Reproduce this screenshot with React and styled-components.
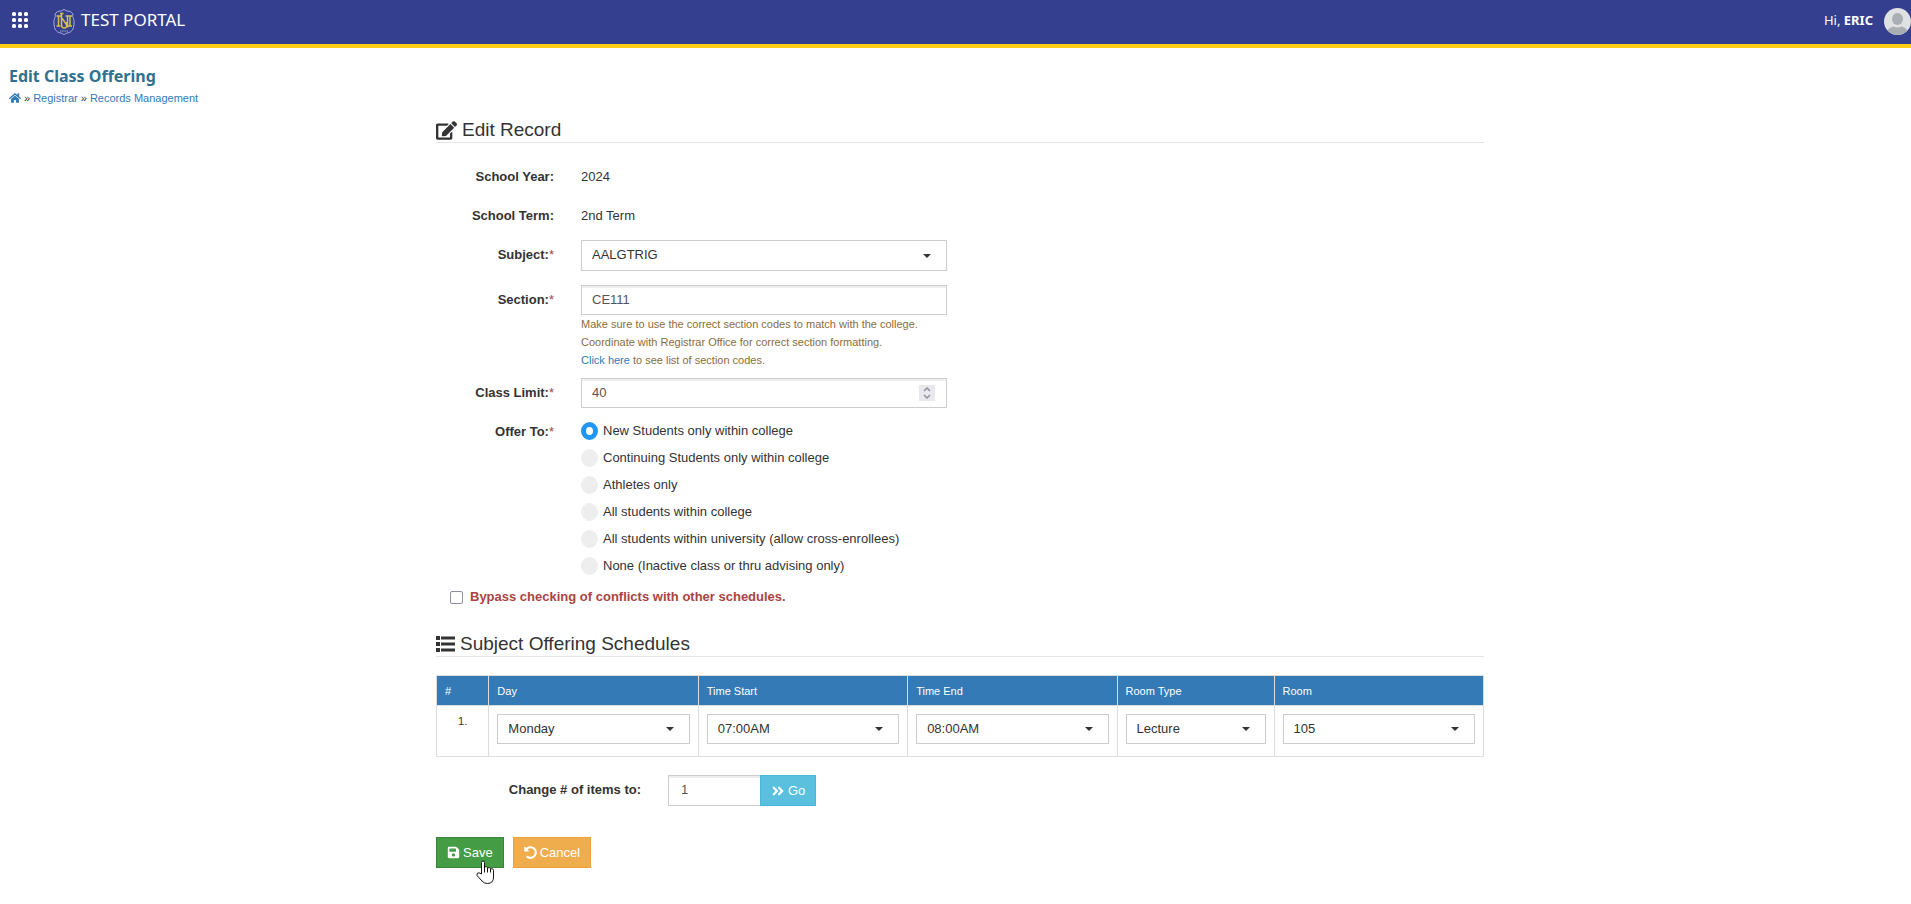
import React, { useState } from 'react';
import styled, { createGlobalStyle } from 'styled-components';
import { FaHome, FaEdit, FaSave, FaUndoAlt, FaAngleDoubleRight } from 'react-icons/fa';

const GlobalStyle = createGlobalStyle`
    * { box-sizing:border-box; }

    body{
        margin:0;
        background:#fff;
        color:#333;
        font-family:"Liberation Sans", Arial, sans-serif;
        font-size:13px;
        line-height:18px;
    }

    button, input, select{
        font-family:inherit;
        font-size:13px;
    }
`

const TopBar = styled.header`
    display:flex;
    align-items:flex-start;
    height:48px;
    padding:8px 0 0 12px;
    background:#353f8f;
    border-bottom:4px solid #fdd017;
    color:#fff;
    font-family:"Noto Sans", "Open Sans", sans-serif;
    line-height:24px;
`

const MenuButton = styled.button`
    display:flex;
    margin-right:25px;
    padding:4px 0;
    border:0;
    background:none;
    color:#fff;
    cursor:pointer;
`

const Brand = styled.a`
    display:flex;
    align-items:flex-start;
    gap:6px;
    color:#fff;
    font-size:17px;
    font-weight:400;
    text-decoration:none;
`

const Account = styled.div`
    display:flex;
    align-items:flex-start;
    gap:11px;
    margin-left:auto;
    font-size:13px;
`

const PageHead = styled.div`
    padding:17px 9px 0;
`

const PageTitle = styled.h1`
    margin:0;
    color:#31708f;
    font-family:"Noto Sans", "Open Sans", sans-serif;
    font-size:16px;
    font-weight:700;
    line-height:22px;
`

const Crumbs = styled.nav`
    display:flex;
    align-items:center;
    gap:3px;
    margin-top:2px;
    font-size:11px;
`

const Link = styled.a`
    display:inline-flex;
    color:#337ab7;
    text-decoration:none;
`

const Page = styled.main`
    display:grid;
    grid-template-columns:436fr 1048fr 427fr;
`

const Form = styled.form`
    grid-column:2;
    padding:9px 0 36px;
`

const Legend = styled.h2`
    display:flex;
    align-items:center;
    gap:5px;
    margin:${props => props.$spaced ? '24px 0 0' : '0'};
    padding-top:2px;
    border-bottom:1px solid #e5e5e5;
    font-size:19px;
    font-weight:400;
    line-height:24px;
`

const Fields = styled.div`
    display:grid;
    gap:${props => props.$gap || 14}px;
    margin-top:${props => props.$top || 0}px;
`

const Row = styled.div`
    display:grid;
    grid-template-columns:118fr 366fr 510fr;
    column-gap:27px;
    align-items:start;
`

const Label = styled.label`
    padding-top:6px;
    font-weight:700;
    text-align:right;
`

const Star = styled.span`
    color:#a94442;
    font-weight:400;
`

const Value = styled.div`
    padding-top:6px;
`

const Input = styled.input`
    display:block;
    width:100%;
    height:30px;
    padding:0 10px 2px;
    border:1px solid #ccc;
    border-radius:0;
    background:#fff;
    box-shadow:inset 0 2px 0 #eee;
    color:#555;

    &::-webkit-inner-spin-button{
        display:none;
    }
`

const SelectWrap = styled.div`
    display:grid;
    align-items:center;

    & > *{
        grid-area:1 / 1;
    }

    & svg{
        justify-self:end;
        margin-right:16px;
        pointer-events:none;
    }
`

const SelectBox = styled.select`
    width:100%;
    height:${props => props.$tall ? 31 : 30}px;
    padding:0 10px 2px;
    border:1px solid #ccc;
    border-radius:0;
    appearance:none;
    background:#fff;
    color:#333;
`

const NumberWrap = styled(SelectWrap)`
    & svg{
        margin-right:12px;
    }
`

const Help = styled.p`
    margin:0;
    color:#8a6d3b;
    font-size:11px;
    white-space:nowrap;
`

const Choices = styled.div`
    display:grid;
    gap:9px;
    padding-top:5px;
`

const Choice = styled.label`
    display:flex;
    align-items:center;
    gap:5px;
    white-space:nowrap;
`

const Radio = styled.input`
    appearance:none;
    width:17px;
    height:18px;
    margin:0;
    border:${props => props.checked ? '5px solid #2196f3' : '0'};
    border-radius:50%;
    background:${props => props.checked ? '#fff' : '#eee'};
`

const Bypass = styled.label`
    display:flex;
    align-items:center;
    gap:7px;
    margin-top:13px;
    padding-left:14px;
    color:#a94442;
    font-weight:700;
`

const Check = styled.input`
    appearance:none;
    width:13px;
    height:13px;
    margin:0;
    border:1px solid #8f8f9d;
    border-radius:2px;
    background:#fff;

    &:checked{
        background:#2196f3;
    }
`

const Table = styled.table`
    width:100%;
    margin-top:18px;
    border-collapse:collapse;
    table-layout:fixed;
    font-size:11px;

    & th, & td{
        border:1px solid #ddd;
        padding:8px;
        text-align:left;
        vertical-align:top;
    }

    & th{
        padding:6px 8px 5px;
        background:#337ab7;
        color:#fff;
        font-weight:400;
    }

    & td{
        padding-bottom:12px;
    }

    & td:first-child{
        padding-top:6px;
        text-align:center;
    }
`

const Items = styled.div`
    display:flex;
    align-items:flex-start;
    margin-top:18px;
`

const ItemsLabel = styled(Label)`
    width:205px;
    margin-right:27px;
`

const ItemsInput = styled(Input)`
    width:92px;
    height:31px;
    padding:0 12px 2px;
    border-right:0;
`

const Button = styled.button`
    display:flex;
    align-items:center;
    gap:3px;
    height:31px;
    padding:0 10px;
    border:1px solid ${props => props.$edge};
    background:${props => props.$fill};
    color:#fff;
    cursor:pointer;
`

const Actions = styled.div`
    display:flex;
    gap:9px;
    margin-top:31px;
`

const SaveSlot = styled.div`
    position:relative;
`

const Pointer = styled.svg`
    position:absolute;
    left:40px;
    top:23px;
    pointer-events:none;
`

const offers = [
    'New Students only within college',
    'Continuing Students only within college',
    'Athletes only',
    'All students within college',
    'All students within university (allow cross-enrollees)',
    'None (Inactive class or thru advising only)'
]

const schedule = [
    { name:'Day', value:'Monday', width:'20%' },
    { name:'Time Start', value:'07:00AM', width:'20%' },
    { name:'Time End', value:'08:00AM', width:'20%' },
    { name:'Room Type', value:'Lecture', width:'15%' },
    { name:'Room', value:'105', width:'20%' }
]

const GridIcon = () => (
    <svg width="16" height="16" viewBox="0 0 16 16" fill="currentColor" aria-hidden="true">
        {[0, 6, 12].map(y => [0, 6, 12].map(x => (
            <rect key={x + '-' + y} x={x} y={y} width="4" height="4" rx="1.5" />
        )))}
    </svg>
)

const Crest = () => (
    <svg width="22" height="28" viewBox="0 0 22 28" fill="none" aria-hidden="true">
        <path d="M4.500 3.500Q8 3.500 11 1.500q3 2 6.500 2L20 6q-1 2 .5 4.500.8 2 .5 5.500-.3 4-1.500 6-1.500 2.300-4.500 2.800-2.500.4-4 1.900-1.500-1.500-4-1.900-3-.5-4.500-2.800Q1.300 20 1 16q-.3-3.500.5-5.500Q3 8 2 6z" stroke="#a3aad2" />
        <path d="M3.500 8h4l7 10V8M5.500 8v10M3.500 18h4M12.500 8H19M17 8v10M14 18h5M8.500 6v10.500q0 3.500 2.700 3.500t2.700-3.500V14M7 5.500h3.500" stroke="#d8c04e" strokeWidth="1.500" />
        <path d="M7 23h8" stroke="#a3aad2" strokeDasharray="1.500 .7" />
    </svg>
)

const Avatar = () => (
    <svg width="27" height="27" viewBox="0 0 27 27" aria-hidden="true">
        <clipPath id="round"><circle cx="13.5" cy="13.5" r="13.5" /></clipPath>
        <g clipPath="url(#round)">
            <rect width="27" height="27" fill="#dfe1e3" />
            <ellipse cx="13.500" cy="11" rx="5.500" ry="6" fill="#a9afb3" />
            <path d="M3 25c0-4 4-6 6.500-6.500 2.500 1.300 5.500 1.300 8 0C20 19 24 21 24 25v3H3z" fill="#a9afb3" />
        </g>
    </svg>
)

const ListIcon = () => (
    <svg width="19" height="16" viewBox="0 0 19 16" fill="currentColor" aria-hidden="true">
        <path d="M0 0h4v4H0zM0 6h4v4H0zM0 12h4v4H0zM5 0.500h14v3H5zM5 6.500h14v3H5zM5 12.500h14v3H5z" />
    </svg>
)

const Caret = () => (
    <svg width="8" height="4" viewBox="0 0 8 4" aria-hidden="true">
        <path d="M0 0h8L4 4z" fill="#333" />
    </svg>
)

const Spinner = () => (
    <svg width="16" height="16" viewBox="0 0 16 16" fill="none" aria-hidden="true">
        <rect width="16" height="16" fill="#e9e9ed" />
        <path d="M5 6l3-3 3 3M5 10l3 3 3-3" stroke="#8f8f9d" strokeWidth="1.500" />
    </svg>
)

const Hand = () => (
    <Pointer width="19" height="25" viewBox="0 0 19 25" aria-hidden="true">
        <path d="M5.500 14V2.500a1.500 1.500 0 0 1 3 0V7q2.500-1 3 .8 2.500-.8 3 .9 3-.4 3 1.500V17q0 6.500-6 6.500-3.500 0-5.500-2.500L1 15.500Q.5 12.500 3 12.800z" fill="#fff" stroke="#15151f" />
        <path d="M8.500 7v5.500M11.500 8v4.500M14.500 9v3.500" stroke="#15151f" fill="none" />
    </Pointer>
)

const Select = ({ id, value, tall, label }) => (
    <SelectWrap>
        <SelectBox id={id} defaultValue={value} $tall={tall} aria-label={label}>
            <option>{value}</option>
        </SelectBox>
        <Caret />
    </SelectWrap>
)

const App = () => {
    const [offer, setOffer] = useState(0);

    return (
        <>
            <GlobalStyle />
            <TopBar>
                <MenuButton type="button" aria-label="Menu"><GridIcon /></MenuButton>
                <Brand href="#"><Crest />TEST PORTAL</Brand>
                <Account>
                    <span>Hi, <b>ERIC</b></span>
                    <Avatar />
                </Account>
            </TopBar>
            <PageHead>
                <PageTitle>Edit Class Offering</PageTitle>
                <Crumbs>
                    <Link href="#" aria-label="Home"><FaHome size={12} /></Link>
                    <span>»</span>
                    <Link href="#">Registrar</Link>
                    <span>»</span>
                    <Link href="#">Records Management</Link>
                </Crumbs>
            </PageHead>
            <Page>
                <Form onSubmit={e => e.preventDefault()}>
                    <Legend><FaEdit size={21} />Edit Record</Legend>
                    <Fields $gap={15} $top={19}>
                        <Row>
                            <Label as="div">School Year:</Label>
                            <Value>2024</Value>
                        </Row>
                        <Row>
                            <Label as="div">School Term:</Label>
                            <Value>2nd Term</Value>
                        </Row>
                    </Fields>
                    <Fields $gap={14} $top={15}>
                        <Row>
                            <Label htmlFor="subject">Subject:<Star>*</Star></Label>
                            <Select id="subject" value="AALGTRIG" tall />
                        </Row>
                        <Row>
                            <Label htmlFor="section">Section:<Star>*</Star></Label>
                            <div>
                                <Input id="section" defaultValue="CE111" />
                                <Help>
                                    Make sure to use the correct section codes to match with the college.<br />
                                    Coordinate with Registrar Office for correct section formatting.<br />
                                    <Link href="#">Click here</Link> to see list of section codes.
                                </Help>
                            </div>
                        </Row>
                    </Fields>
                    <Fields $gap={9} $top={9}>
                        <Row>
                            <Label htmlFor="limit">Class Limit:<Star>*</Star></Label>
                            <NumberWrap>
                                <Input id="limit" type="number" defaultValue="40" />
                                <Spinner />
                            </NumberWrap>
                        </Row>
                        <Row>
                            <Label as="div" id="offer">Offer To:<Star>*</Star></Label>
                            <Choices role="radiogroup" aria-labelledby="offer">
                                {offers.map((text, index) => (
                                    <Choice key={index}>
                                        <Radio type="radio" name="offer" checked={offer === index} onChange={() => setOffer(index)} />
                                        {text}
                                    </Choice>
                                ))}
                            </Choices>
                        </Row>
                    </Fields>
                    <Bypass>
                        <Check type="checkbox" />
                        Bypass checking of conflicts with other schedules.
                    </Bypass>

                    <Legend $spaced><ListIcon />Subject Offering Schedules</Legend>
                    <Table>
                        <colgroup>
                            <col style={{ width: '5%' }} />
                            {schedule.map(item => <col key={item.name} style={{ width: item.width }} />)}
                        </colgroup>
                        <thead>
                            <tr>
                                <th>#</th>
                                {schedule.map(item => <th key={item.name}>{item.name}</th>)}
                            </tr>
                        </thead>
                        <tbody>
                            <tr>
                                <td>1.</td>
                                {schedule.map(item => (
                                    <td key={item.name}><Select value={item.value} label={item.name} /></td>
                                ))}
                            </tr>
                        </tbody>
                    </Table>
                    <Items>
                        <ItemsLabel htmlFor="items">Change # of items to:</ItemsLabel>
                        <ItemsInput id="items" defaultValue="1" />
                        <Button type="button" $fill="#5bc0de" $edge="#46b8da"><FaAngleDoubleRight size={14} />Go</Button>
                    </Items>
                    <Actions>
                        <SaveSlot>
                            <Button type="submit" $fill="#449d44" $edge="#398439"><FaSave size={13} />Save</Button>
                            <Hand />
                        </SaveSlot>
                        <Button type="button" $fill="#f0ad4e" $edge="#eea236"><FaUndoAlt size={13} />Cancel</Button>
                    </Actions>
                </Form>
            </Page>
        </>
    )
}

export default App;
